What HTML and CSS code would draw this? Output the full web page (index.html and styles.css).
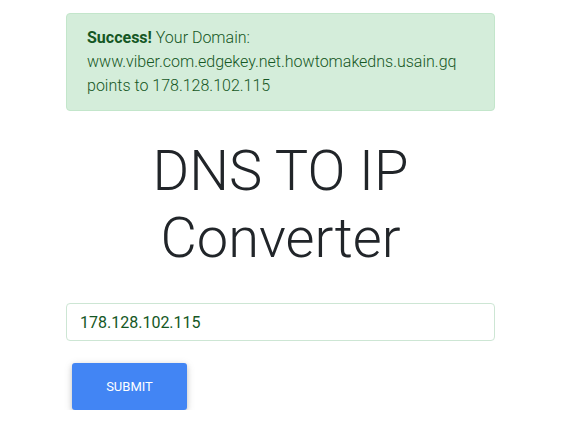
FILE: index.html
```html
<!DOCTYPE html>
<html>
<head>
<meta charset="utf-8">
<link rel="stylesheet" href="styles.css">
</head>
<body>
<div class="container">
  <div class="alert"><strong>Success!</strong> Your Domain: www.viber.com.edgekey.net.howtomakedns.usain.gq points to 178.128.102.115</div>
  <h1 class="title">DNS TO IP Converter</h1>
  <form class="form">
    <input class="field" type="text" value="178.128.102.115">
    <button class="btn" type="button">Submit</button>
  </form>
</div>
</body>
</html>
```
FILE: styles.css
```css
html, body {
  margin: 0;
  padding: 0;
  background: #fff;
}
body {
  font-family: Roboto, "Liberation Sans", sans-serif;
  font-weight: 300;
}
.container {
  width: 429px;
  margin-left: 66px;
  padding-top: 13px;
}
.alert {
  background: #d4edda;
  border: 1px solid #c3e6cb;
  border-radius: 4px;
  color: #155724;
  padding: 12px 20px;
  font-size: 16px;
  line-height: 24px;
  font-weight: 300;
}
.alert strong {
  font-weight: 700;
}
.title {
  margin: 27px 0 0;
  text-align: center;
  font-size: 56px;
  line-height: 1.2;
  font-weight: 300;
  color: #212529;
}
.form {
  margin-top: 31px;
}
.field {
  display: block;
  box-sizing: border-box;
  width: 100%;
  height: 38px;
  border: 1px solid #cde6d4;
  border-radius: 4px;
  padding: 0 13px;
  font-family: Roboto, "Liberation Sans", sans-serif;
  font-size: 16px;
  font-weight: 400;
  color: #155724;
  outline: none;
}
.btn {
  display: block;
  margin: 22px 0 0 6px;
  width: 115px;
  height: 47px;
  border: 0;
  border-radius: 3px;
  background: #4285f4;
  color: #fff;
  font-family: Roboto, "Liberation Sans", sans-serif;
  font-size: 13px;
  font-weight: 400;
  text-transform: uppercase;
  box-shadow: 0 2px 5px 0 rgba(0,0,0,.16), 0 2px 10px 0 rgba(0,0,0,.12);
}
```
